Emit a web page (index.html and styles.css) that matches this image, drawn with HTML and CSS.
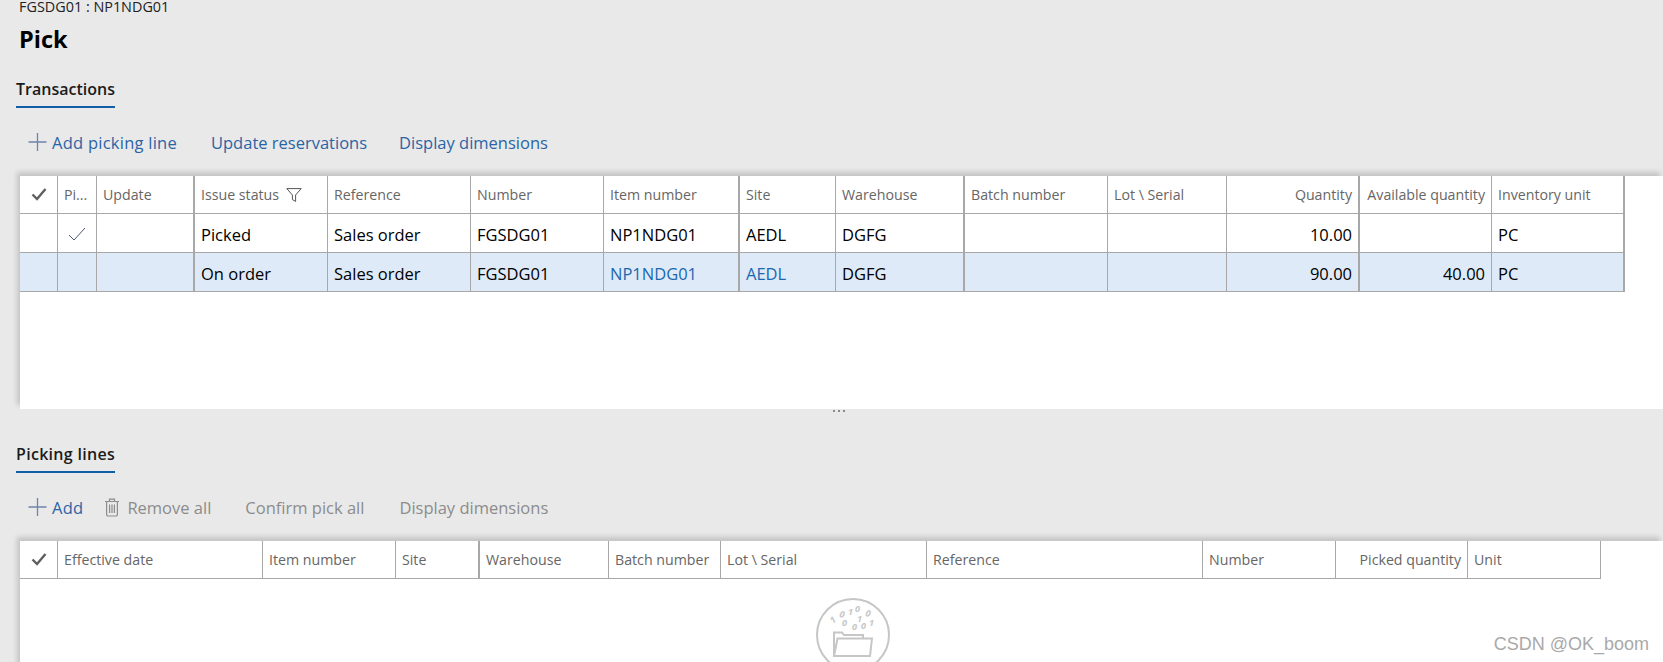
FILE: index.html
```html
<!DOCTYPE html>
<html lang="en">
<head>
    <meta charset="UTF-8">
    <meta name="viewport" content="width=device-width, initial-scale=1.0">
    <title>Pick</title>
    <link rel="stylesheet" href="styles.css">
</head>
<body>

    <div class="page-head">
        <div class="crumb">FGSDG01 : NP1NDG01</div>
        <h1>Pick</h1>
    </div>

    <div class="tab"><span>Transactions</span></div>
    <div class="toolbar">
        <a class="tool tool-add">
            <svg class="icon-plus" viewBox="0 0 18 18"><path d="M9 0V18M0 9H18"/></svg>
            Add picking line
        </a>
        <a class="tool tool-update">Update reservations</a>
        <a class="tool tool-display">Display dimensions</a>
    </div>

    <div class="panel panel-top">
        <table class="grid grid-trans">
            <thead>
                <tr>
                    <th class="check-col"><svg class="icon-check" viewBox="0 0 16 14"><path d="M1.5 7.5L6 12L14.5 2"/></svg></th>
                    <th>Pi...</th>
                    <th class="wide-line">Update</th>
                    <th>Issue status <svg class="icon-filter" viewBox="0 0 16 14"><path d="M.8 .6H15.2L9.6 7V13.4L6.4 11.6V7Z"/></svg></th>
                    <th>Reference</th>
                    <th>Number</th>
                    <th class="wide-line">Item number</th>
                    <th>Site</th>
                    <th class="wide-line">Warehouse</th>
                    <th>Batch number</th>
                    <th>Lot \ Serial</th>
                    <th class="num wide-line">Quantity</th>
                    <th class="num">Available quantity</th>
                    <th class="wide-line">Inventory unit</th>
                </tr>
            </thead>
            <tbody>
                <tr>
                    <td></td>
                    <td class="tick-cell"><svg class="icon-tick" viewBox="0 0 18 14"><path d="M1 8L6 13L17 1"/></svg></td>
                    <td class="wide-line"></td>
                    <td>Picked</td>
                    <td>Sales order</td>
                    <td>FGSDG01</td>
                    <td class="wide-line">NP1NDG01</td>
                    <td>AEDL</td>
                    <td class="wide-line">DGFG</td>
                    <td></td>
                    <td></td>
                    <td class="num wide-line">10.00</td>
                    <td class="num"></td>
                    <td class="wide-line">PC</td>
                </tr>
                <tr class="selected">
                    <td></td>
                    <td></td>
                    <td class="wide-line"></td>
                    <td>On order</td>
                    <td>Sales order</td>
                    <td>FGSDG01</td>
                    <td class="wide-line link">NP1NDG01</td>
                    <td class="link">AEDL</td>
                    <td class="wide-line">DGFG</td>
                    <td></td>
                    <td></td>
                    <td class="num wide-line">90.00</td>
                    <td class="num">40.00</td>
                    <td class="wide-line">PC</td>
                </tr>
            </tbody>
        </table>
    </div>

    <div class="splitter"><i></i><i></i><i></i></div>

    <div class="tab tab-lines"><span>Picking lines</span></div>
    <div class="toolbar">
        <a class="tool tool-add">
            <svg class="icon-plus" viewBox="0 0 18 18"><path d="M9 0V18M0 9H18"/></svg>
            Add
        </a>
        <a class="tool tool-remove off">
            <svg class="icon-trash" viewBox="0 0 16 19"><path d="M1 3.5H15M5.5 3.5V1.2H10.5V3.5M2.6 3.5V16.6Q2.6 18 4 18H12Q13.4 18 13.4 16.6V3.5M5.6 6.5V15M8 6.5V15M10.4 6.5V15"/></svg>
            Remove all
        </a>
        <a class="tool tool-confirm off">Confirm pick all</a>
        <a class="tool tool-display off">Display dimensions</a>
    </div>

    <div class="panel panel-bottom">
        <table class="grid grid-lines">
            <thead>
                <tr>
                    <th class="check-col"><svg class="icon-check" viewBox="0 0 16 14"><path d="M1.5 7.5L6 12L14.5 2"/></svg></th>
                    <th>Effective date</th>
                    <th>Item number</th>
                    <th class="wide-line">Site</th>
                    <th>Warehouse</th>
                    <th>Batch number</th>
                    <th>Lot \ Serial</th>
                    <th>Reference</th>
                    <th>Number</th>
                    <th class="num">Picked quantity</th>
                    <th>Unit</th>
                </tr>
            </thead>
        </table>
        <svg class="empty-icon" viewBox="0 0 76 76">
            <circle cx="38" cy="38" r="36"/>
            <path d="M19 59V35.500H27L29 38H48V41M19 59L22.500 41.500H57L55 59Z"/>
            <text x="24" y="20" transform="rotate(12 24 20)">0</text>
            <text x="33" y="18">1</text>
            <text x="40" y="15">0</text>
            <text x="50" y="19" transform="rotate(12 50 19)">0</text>
            <text x="18" y="27" transform="rotate(-40 18 27)">1</text>
            <text x="27" y="29">0</text>
            <text x="37" y="33">0</text>
            <text x="42" y="25">1</text>
            <text x="46" y="32">0</text>
            <text x="54" y="29">1</text>
        </svg>
    </div>

    <div class="watermark">CSDN @OK_boom</div>

</body>
</html>
```

FILE: styles.css
```css
* {
    box-sizing: border-box;
    margin: 0;
    padding: 0;
}
html, body {
    height: 662px;
    overflow: hidden;
}
body {
    font-family: 'Open Sans', 'Noto Sans', sans-serif;
    background-color: #e9e9e9;
    color: #000;
    position: relative;
}
.page-head {
    padding-left: 19px;
}
.crumb {
    font-size: 14.4px;
    line-height: 14px;
    color: #222;
}
h1 {
    font-size: 23.5px;
    font-weight: 700;
    line-height: 32px;
    margin-top: 9px;
}
.tab {
    margin: 23px 0 0 16px;
    display: flex;
}
.tab span {
    font-size: 16px;
    font-weight: 600;
    line-height: 22px;
    color: #1b1b1b;
    padding-bottom: 6px;
    border-bottom: 2px solid #105ea8;
}
.tab-lines span {
    letter-spacing: 0.3px;
}
.toolbar {
    display: flex;
    align-items: center;
    height: 36px;
    margin-top: 17px;
    padding: 0 0 2px 28px;
    font-size: 16.5px;
    color: #2b64a4;
}
.tool {
    display: flex;
    align-items: center;
    white-space: nowrap;
}
.tool.off {
    color: #8c8c8c;
}
.tool-add {
    letter-spacing: 0.25px;
}
.icon-plus {
    width: 19px;
    height: 18px;
    margin-right: 5px;
    fill: none;
    stroke: #6d84ac;
    stroke-width: 1.3;
}
.icon-trash {
    width: 16px;
    height: 19px;
    margin-right: 7px;
    fill: none;
    stroke: #8c8c8c;
    stroke-width: 1.2;
}
.tool-update {
    margin-left: 34px;
}
.tool-display {
    margin-left: 32px;
}
.tool-remove {
    margin-left: 21px;
}
.tool-confirm {
    margin-left: 34px;
}
.tool-confirm + .tool-display {
    margin-left: 35px;
}
.panel {
    background: #fff;
    margin: 15px 0 0 20px;
    box-shadow: -3px -4px 5px rgba(0, 0, 0, 0.16);
}
.panel-top {
    height: 233px;
}
.panel-bottom {
    height: 140px;
}
.splitter {
    height: 11px;
    display: flex;
    justify-content: center;
    gap: 3px;
    padding: 1px 0 0 15px;
}
.splitter i {
    width: 2px;
    height: 2px;
    background: #8a8a8a;
}
.grid {
    border-collapse: separate;
    border-spacing: 0;
    table-layout: fixed;
}
.grid th, .grid td {
    border-right: 1px solid #a8a8a8;
    border-bottom: 1px solid #a8a8a8;
    padding: 0 6px;
    text-align: left;
    white-space: nowrap;
    overflow: hidden;
}
.grid th {
    height: 38px;
    padding-bottom: 1px;
    font-size: 14.2px;
    font-weight: 400;
    color: #666;
}
.grid td {
    height: 39px;
    font-size: 16.5px;
    padding-top: 2px;
}
.grid .wide-line {
    border-right-width: 2px;
}
.grid .num {
    text-align: right;
}
.check-col {
    text-align: center;
}
.selected td {
    background-color: #deeaf7;
}
.selected .link {
    color: #1a68b0;
}
.grid-trans {
    width: 1605px;
}
.grid-trans th:nth-child(1) { width: 38px; }
.grid-trans th:nth-child(2) { width: 39px; }
.grid-trans th:nth-child(3) { width: 98px; }
.grid-trans th:nth-child(4) { width: 133px; }
.grid-trans th:nth-child(5) { width: 143px; }
.grid-trans th:nth-child(6) { width: 133px; }
.grid-trans th:nth-child(7) { width: 136px; }
.grid-trans th:nth-child(8) { width: 96px; }
.grid-trans th:nth-child(9) { width: 129px; }
.grid-trans th:nth-child(10) { width: 143px; }
.grid-trans th:nth-child(11) { width: 119px; }
.grid-trans th:nth-child(12) { width: 133px; }
.grid-trans th:nth-child(13) { width: 132px; }
.grid-trans th:nth-child(14) { width: 133px; }
.grid-lines {
    width: 1581px;
}
.grid-lines th:nth-child(1) { width: 38px; }
.grid-lines th:nth-child(2) { width: 205px; }
.grid-lines th:nth-child(3) { width: 133px; }
.grid-lines th:nth-child(4) { width: 84px; }
.grid-lines th:nth-child(5) { width: 129px; }
.grid-lines th:nth-child(6) { width: 112px; }
.grid-lines th:nth-child(7) { width: 206px; }
.grid-lines th:nth-child(8) { width: 276px; }
.grid-lines th:nth-child(9) { width: 133px; }
.grid-lines th:nth-child(10) { width: 132px; }
.grid-lines th:nth-child(11) { width: 133px; }
.icon-check {
    display: block;
    width: 16px;
    height: 14px;
    margin: 0 auto;
    fill: none;
    stroke: #5f5f5f;
    stroke-width: 2.4;
}
.icon-tick {
    display: block;
    width: 18px;
    height: 14px;
    margin: 0 auto;
    fill: none;
    stroke: #4a5a70;
    stroke-width: 1;
}
.icon-filter {
    width: 16px;
    height: 14px;
    margin-left: 3px;
    vertical-align: -2px;
    fill: none;
    stroke: #555;
    stroke-width: 1;
}
.empty-icon {
    display: block;
    width: 76px;
    height: 76px;
    margin: 18px 0 0 795px;
    fill: none;
    stroke: #c6c6c6;
    stroke-width: 2;
}
.empty-icon text {
    font-family: 'Noto Sans', sans-serif;
    font-size: 9px;
    font-weight: 700;
    font-style: italic;
    fill: #c6c6c6;
    stroke: none;
}
.watermark {
    position: absolute;
    right: 14px;
    top: 634px;
    font-family: 'Liberation Sans', sans-serif;
    font-size: 18px;
    line-height: 20px;
    color: #a9a9a9;
}
```
